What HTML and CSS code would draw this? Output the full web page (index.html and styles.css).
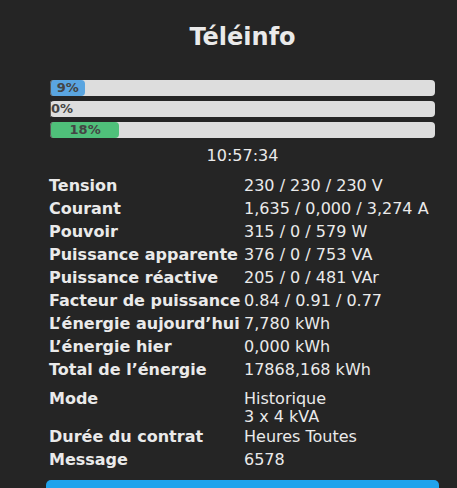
FILE: index.html
```html
<!DOCTYPE html>
<html lang="fr">
<head>
    <meta charset="UTF-8">
    <meta name="viewport" content="width=device-width, initial-scale=1.0">
    <title>Téléinfo</title>
    <link rel="stylesheet" href="styles.css">
</head>
<body>
    <div class="main">
        <h2 class="title">Téléinfo</h2>

        <div class="bars">
            <div class="bar"><div class="fill blue" style="width: 9%;">9%</div></div>
            <div class="bar"><div class="fill" style="width: 0%;">0%</div></div>
            <div class="bar"><div class="fill green" style="width: 18%;">18%</div></div>
        </div>

        <div class="clock">10:57:34</div>

        <table class="info">
            <tr><th>Tension</th><td>230 / 230 / 230 V</td></tr>
            <tr><th>Courant</th><td>1,635 / 0,000 / 3,274 A</td></tr>
            <tr><th>Pouvoir</th><td>315 / 0 / 579 W</td></tr>
            <tr><th>Puissance apparente</th><td>376 / 0 / 753 VA</td></tr>
            <tr><th>Puissance réactive</th><td>205 / 0 / 481 VAr</td></tr>
            <tr><th>Facteur de puissance</th><td>0.84 / 0.91 / 0.77</td></tr>
            <tr><th>L’énergie aujourd’hui</th><td>7,780 kWh</td></tr>
            <tr><th>L’énergie hier</th><td>0,000 kWh</td></tr>
            <tr><th>Total de l’énergie</th><td>17868,168 kWh</td></tr>
            <tr class="mode"><th>Mode</th><td>Historique<br>3 x 4 kVA</td></tr>
            <tr><th>Durée du contrat</th><td>Heures Toutes</td></tr>
            <tr><th>Message</th><td>6578</td></tr>
        </table>

        <button class="btn">Configuration</button>
    </div>
</body>
</html>
```

FILE: styles.css
```css
body {
    margin: 0;
    background: #252525;
    font-family: 'DejaVu Sans', Verdana, sans-serif;
    font-size: 16px;
    color: #eaeaea;
}
.main {
    width: 393px;
    margin-left: 46px;
}
.title {
    text-align: center;
    font-size: 24px;
    font-weight: bold;
    margin: 0;
    padding-top: 22px;
    height: 58px;
    line-height: 30px;
}
.bars {
    padding: 0 4px 0 4px;
    display: flex;
    flex-direction: column;
    gap: 5px;
}
.bar {
    height: 16px;
    background: #dddddd;
    border-radius: 4px;
}
.fill {
    height: 16px;
    line-height: 16px;
    font-size: 13px;
    font-weight: bold;
    color: #444;
    text-align: center;
    border-radius: 4px;
    border-left: 1px solid #555;
    box-sizing: border-box;
    white-space: nowrap;
}
.fill.blue {
    background: #5aa5e0;
}
.fill.green {
    background: #4fc07a;
}
.clock {
    text-align: center;
    margin-top: 8px;
    height: 20px;
    line-height: 20px;
}
.info {
    border-collapse: collapse;
    margin-left: 3px;
    margin-top: 8px;
}
.info th,
.info td {
    padding: 2px 0;
    line-height: 19px;
    text-align: left;
    vertical-align: top;
    white-space: nowrap;
}
.info th {
    width: 195px;
    font-weight: bold;
}
.mode th,
.mode td {
    padding-top: 9px;
    padding-bottom: 0;
    line-height: 17.5px;
}
.btn {
    display: block;
    width: 100%;
    height: 44px;
    line-height: 44px;
    margin-top: 9px;
    padding: 0;
    border: 0;
    border-radius: 5px;
    background: #1fa3ec;
    color: #fff;
    font-family: inherit;
    font-size: 19px;
}
```
